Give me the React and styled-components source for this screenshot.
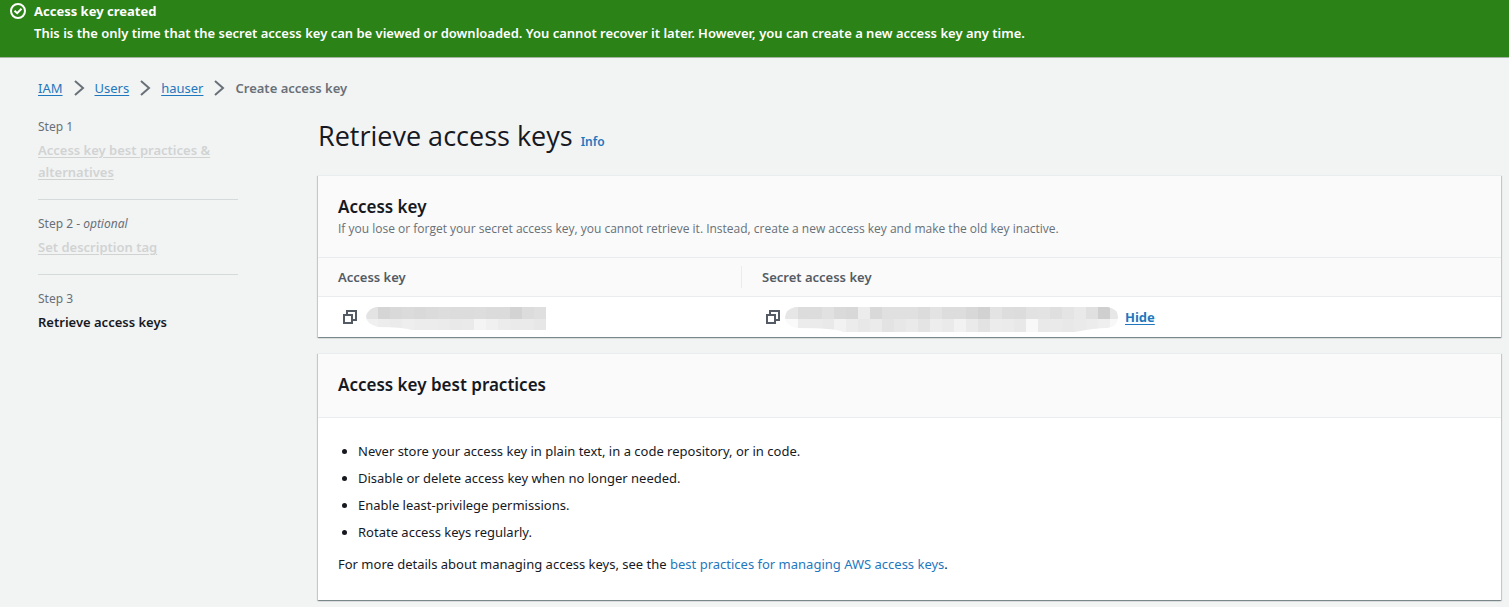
import React from "react";
import styled, { createGlobalStyle, css } from "styled-components";

const GlobalStyle = createGlobalStyle`
  *, *::before, *::after { box-sizing: border-box; }
  body {
    margin: 0;
    background: #f2f3f3;
    color: #16191f;
    font-family: "Noto Sans", "Open Sans", sans-serif;
    font-size: 13px;
    line-height: 22px;
  }
  h1, h2, p, ul, ol, dl { margin: 0; padding: 0; }
`;

const PROSE_FONT = `"Open Sans", "Noto Sans", sans-serif`;

const Flash = styled.section`
  display: flex;
  gap: 8px;
  padding: 0 10px 13px;
  background: #2b8217;
  border-bottom: 1px solid #a5b3a2;
  color: #fff;
`;

const FlashIcon = styled.svg`
  flex: none;
  width: 16px;
  height: 16px;
  margin-top: 3px;
`;

const FlashTitle = styled.p`
  font-weight: 700;
`;

const FlashText = styled.p`
  font-weight: 600;
`;

const Page = styled.div`
  padding: 19px 8px 8px 38px;
`;

const Crumbs = styled.ol`
  display: flex;
  flex-wrap: wrap;
  list-style: none;
`;

const Crumb = styled.li`
  display: flex;
  align-items: center;
  color: #687078;
  font-weight: ${(p) => (p.$current ? 600 : 400)};
`;

const Chevron = styled.svg`
  width: 16px;
  height: 16px;
  margin: 0 8px;
`;

const Link = styled.a`
  color: #1f78bd;
  text-decoration: ${(p) => (p.$plain ? "none" : "underline")};
  text-underline-offset: 2px;
`;

const Columns = styled.div`
  display: grid;
  grid-template-columns: 200px minmax(0, 1fr);
  gap: 80px;
`;

const Steps = styled.ol`
  list-style: none;
  padding-top: 18px;
`;

const Step = styled.li`
  padding-bottom: 16px;
  & + & {
    padding-top: 14px;
    border-top: 1px solid #d5dbdb;
  }
`;

const StepNumber = styled.div`
  color: #687078;
  font-size: 12px;
  line-height: 20px;
  margin-bottom: 2px;
`;

const StepName = styled.a`
  color: #d1d3d3;
  font-weight: 600;
  text-decoration: underline;
  text-underline-offset: 2px;
  ${(p) =>
    p.$current &&
    css`
      color: #16191f;
      text-decoration: none;
    `}
`;

const Main = styled.main`
  display: flex;
  flex-direction: column;
  gap: 16px;
`;

const TitleBar = styled.div`
  display: flex;
  align-items: baseline;
  gap: 8px;
  padding: 19px 0 5px;
`;

const Title = styled.h1`
  font-family: ${PROSE_FONT};
  font-size: 27px;
  line-height: 36px;
  font-weight: 400;
`;

const InfoLink = styled(Link)`
  font-size: 12px;
  font-weight: 600;
`;

const Card = styled.section`
  background: #fff;
  border-top: 1px solid #eaeded;
  box-shadow: 0 1px 1px 0 rgba(0, 28, 36, 0.3), 1px 1px 1px 0 rgba(0, 28, 36, 0.15),
    -1px 1px 1px 0 rgba(0, 28, 36, 0.15);
`;

const CardHeader = styled.header`
  padding: 19px 20px 20px;
  background: #fafafa;
  border-bottom: 1px solid #eaeded;
`;

const CardTitle = styled.h2`
  font-size: 17px;
  line-height: 24px;
  font-weight: 600;
`;

const CardNote = styled.p`
  margin-top: 2px;
  color: #687078;
  font-family: ${PROSE_FONT};
  font-size: 12px;
  line-height: 16px;
`;

const KeyTable = styled.table`
  width: 100%;
  table-layout: fixed;
  border-collapse: collapse;
  text-align: left;
`;

const HeadCell = styled.th`
  width: ${(p) => p.$width || "auto"};
  height: 38px;
  padding: 0;
  background: #fafafa;
  border-bottom: 1px solid #eaeded;
  color: #545b64;
  font-weight: 600;
`;

const HeadLabel = styled.div`
  padding: 0 20px;
  border-left: ${(p) => (p.$divided ? "1px solid #eaeded" : "0")};
`;

const Cell = styled.td`
  height: 41px;
  padding: 0 24px;
`;

const KeyValue = styled.div`
  display: flex;
  align-items: center;
  gap: ${(p) => p.$gap};
`;

const CopyButton = styled.button`
  display: flex;
  flex: none;
  padding: 0;
  border: 0;
  background: none;
  color: #545b64;
  cursor: pointer;
`;

const HideButton = styled.button`
  margin-left: 3px;
  padding: 0;
  border: 0;
  background: none;
  color: #1f78bd;
  font: inherit;
  font-weight: 700;
  text-decoration: underline;
  text-underline-offset: 2px;
  cursor: pointer;
`;

const CardBody = styled.div`
  padding: 19px 20px 25px;
`;

const Practices = styled.ul`
  padding: 0 0 0 20px;
`;

const Practice = styled.li`
  padding: 3px 0 2px;
`;

const Details = styled.p`
  padding-top: 8px;
`;

function CopyIcon() {
  return (
    <svg width="16" height="16" viewBox="0 0 16 16" fill="none" stroke="currentColor" strokeWidth="2" aria-hidden="true">
      <path d="M2 6h8v8H2z" />
      <path d="M5 6V2h9v9h-4" />
    </svg>
  );
}

const CELL = 12;

function Mosaic({ id, first, rows, width, outline }) {
  return (
    <svg width={width} height="30" viewBox={`0 -4 ${width} 30`} role="img" aria-label="Hidden value">
      <clipPath id={id}>
        <path d={outline} />
      </clipPath>
      <g clipPath={`url(#${id})`} shapeRendering="crispEdges">
        {rows.map((row, r) =>
          row.split(" ").map((shade, i) => (
            <rect
              key={`${r}-${i}`}
              x={i === 0 ? 0 : first + (i - 1) * CELL}
              y={1 + r * CELL}
              width={i === 0 ? first : CELL}
              height={r === 0 ? CELL : CELL + 1}
              fill={`#${shade}${shade}${shade}`}
            />
          ))
        )}
      </g>
    </svg>
  );
}

const ACCESS_ROWS = [
  "e3 d5 d9 db d9 db dd dc dc dd db db d3 dc df",
  "f0 ed eb ee ec ec eb e9 ea f4 f0 ec ea ea e7",
];

const SECRET_ROWS = [
  "e6 dc dc e1 da d8 ec d9 e0 e0 e0 dc e3 dd dd d8 d2 e3 dd dc e2 e3 df e4 e9 e0 cf e7 ef",
  "fa ec eb e9 f2 ec e8 eb e3 e7 ea e4 ed ea f2 ea e3 ec eb e8 f8 e9 ea e8 ea ec ef f8 fa",
];

const CRUMBS = ["IAM", "Users", "hauser"];

const PRACTICES = [
  "Never store your access key in plain text, in a code repository, or in code.",
  "Disable or delete access key when no longer needed.",
  "Enable least-privilege permissions.",
  "Rotate access keys regularly.",
];

export default function App() {
  return (
    <>
      <GlobalStyle />
      <Flash role="status">
        <FlashIcon viewBox="0 0 16 16" fill="none" stroke="currentColor" strokeWidth="2" aria-hidden="true">
          <circle cx="8" cy="8" r="7" />
          <path d="M4.5 7.8 7.2 10.2 11.5 5.8" />
        </FlashIcon>
        <div>
          <FlashTitle>Access key created</FlashTitle>
          <FlashText>
            This is the only time that the secret access key can be viewed or downloaded. You cannot recover it later.
            However, you can create a new access key any time.
          </FlashText>
        </div>
      </Flash>
      <Page>
        <nav aria-label="Breadcrumbs">
          <Crumbs>
            {CRUMBS.map((name) => (
              <Crumb key={name}>
                <Link href="#">{name}</Link>
                <Chevron viewBox="0 0 16 16" fill="none" stroke="#687078" strokeWidth="2" aria-hidden="true">
                  <path d="M4 1l8 7-8 7" />
                </Chevron>
              </Crumb>
            ))}
            <Crumb $current aria-current="page">
              Create access key
            </Crumb>
          </Crumbs>
        </nav>
        <Columns>
          <Steps>
            <Step>
              <StepNumber>Step 1</StepNumber>
              <StepName href="#">Access key best practices &amp; alternatives</StepName>
            </Step>
            <Step>
              <StepNumber>
                Step 2 - <em>optional</em>
              </StepNumber>
              <StepName href="#">Set description tag</StepName>
            </Step>
            <Step>
              <StepNumber>Step 3</StepNumber>
              <StepName as="span" $current aria-current="step">
                Retrieve access keys
              </StepName>
            </Step>
          </Steps>
          <Main>
            <TitleBar>
              <Title>Retrieve access keys</Title>
              <InfoLink href="#" $plain>
                Info
              </InfoLink>
            </TitleBar>
            <Card>
              <CardHeader>
                <CardTitle>Access key</CardTitle>
                <CardNote>
                  If you lose or forget your secret access key, you cannot retrieve it. Instead, create a new access key
                  and make the old key inactive.
                </CardNote>
              </CardHeader>
              <KeyTable>
                <thead>
                  <tr>
                    <HeadCell $width="423px" scope="col">
                      <HeadLabel>Access key</HeadLabel>
                    </HeadCell>
                    <HeadCell scope="col">
                      <HeadLabel $divided>Secret access key</HeadLabel>
                    </HeadCell>
                  </tr>
                </thead>
                <tbody>
                  <tr>
                    <Cell>
                      <KeyValue $gap="8px">
                        <CopyButton type="button" aria-label="Copy access key">
                          <CopyIcon />
                        </CopyButton>
                        <Mosaic
                          id="access-mask"
                          first={12}
                          rows={ACCESS_ROWS}
                          width={180}
                          outline="M10 1H180V24H46Q36 21 12 21Q0 18 0 10Q2 3 10 1Z"
                        />
                      </KeyValue>
                    </Cell>
                    <Cell>
                      <KeyValue $gap="4px">
                        <CopyButton type="button" aria-label="Copy secret access key">
                          <CopyIcon />
                        </CopyButton>
                        <Mosaic
                          id="secret-mask"
                          first={13}
                          rows={SECRET_ROWS}
                          width={333}
                          outline="M10 1H323Q333 3 333 11Q333 21 322 22Q310 22 290 26H58Q50 22 12 22Q0 20 0 11Q1 3 10 1Z"
                        />
                        <HideButton type="button">Hide</HideButton>
                      </KeyValue>
                    </Cell>
                  </tr>
                </tbody>
              </KeyTable>
            </Card>
            <Card>
              <CardHeader>
                <CardTitle>Access key best practices</CardTitle>
              </CardHeader>
              <CardBody>
                <Practices>
                  {PRACTICES.map((text) => (
                    <Practice key={text}>{text}</Practice>
                  ))}
                </Practices>
                <Details>
                  For more details about managing access keys, see the{" "}
                  <Link href="#" $plain>
                    best practices for managing AWS access keys
                  </Link>
                  .
                </Details>
              </CardBody>
            </Card>
          </Main>
        </Columns>
      </Page>
    </>
  );
}
